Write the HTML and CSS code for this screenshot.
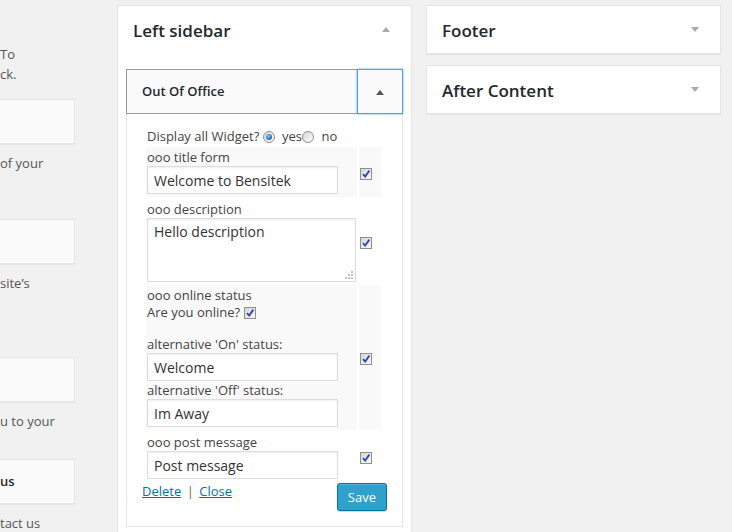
FILE: index.html
```html
<!DOCTYPE html>
<html>
<head>
<meta charset="utf-8">
<title>Widgets</title>
<link rel="stylesheet" href="styles.css">
</head>
<body>
<div class="page">
  <div class="available">
    <p class="intro">To<br>ck.</p>
    <div class="aw-box"></div>
    <p class="aw-desc d1">of your</p>
    <div class="aw-box"></div>
    <p class="aw-desc d2">site’s</p>
    <div class="aw-box"></div>
    <p class="aw-desc d3">u to your</p>
    <div class="aw-box"><span class="aw-title">us</span></div>
    <p class="aw-desc">tact us</p>
  </div>

  <div class="col col-center">
    <section class="sidebar sidebar-tall">
      <div class="sidebar-name">
        <h2>Left sidebar</h2>
        <span class="arrow up light"></span>
      </div>
      <div class="sortables">
        <div class="widget">
          <div class="widget-top">
            <h3>Out Of Office</h3>
            <span class="widget-toggle"><span class="arrow up dark"></span></span>
          </div>
          <div class="widget-inside">
            <div class="form-body">
              <div class="display-line">Display all Widget? <span class="radio checked"></span> yes<span class="radio"></span> no</div>
              <table class="ooo">
                <tr class="alt">
                  <td class="field">
                    <label>ooo title form</label>
                    <input class="text gap" type="text" value="Welcome to Bensitek">
                  </td>
                  <td class="check"><span class="cb"><svg viewBox="0 0 11 11" width="11" height="11"><path d="M2.2 5.6 L4.6 8.4 L9.2 1.8" fill="none" stroke="#3149a3" stroke-width="2"/></svg></span></td>
                </tr>
                <tr>
                  <td class="field">
                    <label>ooo description</label>
                    <span class="ta-wrap">
                      <textarea class="ta">Hello description</textarea>
                      <svg class="grip" viewBox="0 0 10 10" width="10" height="10"><g fill="#c4c4c4"><rect x="7" y="1" width="2" height="2"/><rect x="7" y="4" width="2" height="2"/><rect x="4" y="4" width="2" height="2"/><rect x="7" y="7" width="2" height="2"/><rect x="4" y="7" width="2" height="2"/><rect x="1" y="7" width="2" height="2"/></g></svg>
                    </span>
                  </td>
                  <td class="check"><span class="cb"><svg viewBox="0 0 11 11" width="11" height="11"><path d="M2.2 5.6 L4.6 8.4 L9.2 1.8" fill="none" stroke="#3149a3" stroke-width="2"/></svg></span></td>
                </tr>
                <tr class="alt">
                  <td class="field">
                    <label>ooo online status</label>
                    <div class="online-line">Are you online? <span class="cb"><svg viewBox="0 0 11 11" width="11" height="11"><path d="M2.2 5.6 L4.6 8.4 L9.2 1.8" fill="none" stroke="#3149a3" stroke-width="2"/></svg></span></div>
                    <div class="blank"></div>
                    <label>alternative 'On' status:</label>
                    <input class="text" type="text" value="Welcome">
                    <label>alternative 'Off' status:</label>
                    <input class="text gap" type="text" value="Im Away">
                  </td>
                  <td class="check"><span class="cb"><svg viewBox="0 0 11 11" width="11" height="11"><path d="M2.2 5.6 L4.6 8.4 L9.2 1.8" fill="none" stroke="#3149a3" stroke-width="2"/></svg></span></td>
                </tr>
                <tr>
                  <td class="field">
                    <label>ooo post message</label>
                    <input class="text" type="text" value="Post message">
                  </td>
                  <td class="check"><span class="cb"><svg viewBox="0 0 11 11" width="11" height="11"><path d="M2.2 5.6 L4.6 8.4 L9.2 1.8" fill="none" stroke="#3149a3" stroke-width="2"/></svg></span></td>
                </tr>
              </table>
            </div>
            <div class="actions">
              <div class="links"><a href="#">Delete</a> <span class="sep">|</span> <a href="#">Close</a></div>
              <button class="save" type="button">Save</button>
            </div>
          </div>
        </div>
      </div>
    </section>
  </div>

  <div class="col col-right">
    <section class="sidebar">
      <div class="sidebar-name">
        <h2>Footer</h2>
        <span class="arrow down light"></span>
      </div>
    </section>
    <section class="sidebar">
      <div class="sidebar-name">
        <h2>After Content</h2>
        <span class="arrow down light"></span>
      </div>
    </section>
  </div>
</div>
</body>
</html>
```
FILE: styles.css
```css
* { box-sizing: border-box; }

html, body { margin: 0; padding: 0; }

body {
  background: #f1f1f1;
  font-family: "Open Sans", "Noto Sans", sans-serif;
  font-size: 13px;
  color: #444;
}

.page {
  display: flex;
  align-items: flex-start;
  height: 532px;
  overflow: hidden;
}

/* ---------- available widgets (left, clipped) ---------- */
.available {
  width: 75px;
  flex: none;
  overflow: hidden;
  color: #555;
}

.intro {
  margin: 0;
  padding-top: 45px;
  height: 99px;
  line-height: 19.5px;
}

.aw-box {
  height: 45px;
  background: #fafafa;
  border: 1px solid #e5e5e5;
  border-left: none;
  box-shadow: 0 1px 1px rgba(0, 0, 0, 0.04);
}

.aw-title {
  display: block;
  line-height: 43px;
  font-weight: 600;
  color: #23282d;
}

.aw-desc {
  margin: 0;
  padding-top: 10px;
  line-height: 19.5px;
  white-space: nowrap;
}

.d1 { height: 75px; }
.d2 { height: 93px; }
.d3 { height: 57px; }

/* ---------- columns ---------- */
.col {
  width: 295px;
  flex: none;
  padding-top: 5px;
}

.col-center { margin-left: 42px; }
.col-right { margin-left: 14px; }

.sidebar {
  background: #fff;
  border: 1px solid #e5e5e5;
  box-shadow: 0 1px 1px rgba(0, 0, 0, 0.04);
  margin-bottom: 11px;
}

.sidebar-tall { min-height: 600px; }

.sidebar-name {
  display: flex;
  align-items: center;
  justify-content: space-between;
  height: 47px;
  padding: 0 21px 0 15px;
}

.sidebar-name h2 {
  margin: 0;
  padding: 2px 0 0;
  font-size: 17px;
  font-weight: 600;
  line-height: 23px;
  color: #23282d;
}

.arrow {
  width: 0;
  height: 0;
  border-left: 4px solid transparent;
  border-right: 4px solid transparent;
}

.arrow.up { border-bottom: 5px solid #aaa; }
.arrow.down { border-top: 5px solid #aaa; }
.arrow.light { margin-top: -1px; }
.arrow.up.dark { border-bottom-color: #555; border-left-width: 4.5px; border-right-width: 4.5px; margin-top: 1px; }

/* ---------- widget ---------- */
.sortables { padding: 16px 8px 0; }

.widget-top {
  display: flex;
  height: 45px;
  background: #fafafa;
  border: 1px solid #999;
}

.widget-top h3 {
  flex: 1;
  margin: 0;
  padding: 0 15px;
  font-size: 13px;
  font-weight: 600;
  line-height: 43px;
  color: #23282d;
}

.widget-toggle {
  width: 46px;
  margin: -1px -1px -1px 0;
  border: 1px solid #5b9dd9;
  box-shadow: 0 0 2px rgba(30, 140, 190, 0.8);
  display: flex;
  align-items: center;
  justify-content: center;
}

.widget-inside {
  background: #fff;
  border: 1px solid #e5e5e5;
  border-top: none;
  padding: 0 15px 15px;
}

.form-body { padding-top: 13px; }

.display-line {
  padding-left: 5px;
  line-height: 18px;
  height: 18px;
}

.radio {
  display: inline-block;
  width: 12px;
  height: 12px;
  border-radius: 50%;
  border: 1px solid #8e8f8f;
  background: linear-gradient(135deg, #d8d8d8, #fbfbfb);
  vertical-align: -2px;
  margin-right: 4px;
  position: relative;
}

.radio.checked::after {
  content: "";
  position: absolute;
  left: 2px;
  top: 2px;
  width: 6px;
  height: 6px;
  border-radius: 50%;
  background: radial-gradient(circle at 40% 35%, #7fd0f5, #1f64a6 70%);
}

table.ooo {
  border-spacing: 2px;
  margin-left: 2px;
  table-layout: fixed;
  width: 239px;
}

table.ooo td {
  padding: 1px;
}

td.field {
  width: 211px;
  vertical-align: top;
}

td.check {
  width: 22px;
  vertical-align: middle;
  padding-left: 3px;
}

tr.alt td { background: #f9f9f9; }

td.field label {
  display: block;
  line-height: 19px;
  height: 18px;
}

input.text {
  display: block;
  width: 191px;
  height: 28px;
  margin: 0;
  padding: 3px 6px;
  border: 1px solid #ddd;
  box-shadow: inset 0 1px 2px rgba(0, 0, 0, 0.07);
  background: #fff;
  font-family: "Open Sans", "Noto Sans", sans-serif;
  font-size: 14px;
  color: #333;
  outline: none;
}

input.text.gap { margin-bottom: 2px; }

.ta-wrap {
  display: block;
  position: relative;
  width: 209px;
  height: 64px;
}

textarea.ta {
  display: block;
  width: 209px;
  height: 64px;
  margin: 0;
  padding: 3px 6px;
  border: 1px solid #ddd;
  box-shadow: inset 0 1px 2px rgba(0, 0, 0, 0.07);
  font-family: "Open Sans", "Noto Sans", sans-serif;
  font-size: 14px;
  line-height: 19px;
  color: #333;
  resize: none;
  outline: none;
}

.grip {
  position: absolute;
  right: 2px;
  bottom: 2px;
}

.online-line {
  height: 16px;
  line-height: 17px;
}

.online-line .cb { vertical-align: -2px; }

.blank { height: 15px; }

.cb {
  display: inline-block;
  width: 12px;
  height: 12px;
  border: 1px solid #8e8f8f;
  background: linear-gradient(135deg, #d6d6d6, #f9f9f9);
  position: relative;
  vertical-align: middle;
}

.cb svg {
  position: absolute;
  left: 0;
  top: 0;
  width: 10px;
  height: 10px;
}

/* ---------- actions ---------- */
.actions {
  display: flex;
  justify-content: space-between;
  align-items: flex-start;
}

.links {
  line-height: 18px;
  color: #666;
}

.links a {
  color: #0073aa;
  text-decoration: underline;
}

.sep { margin: 0 2px; }

.save {
  margin-top: 1px;
  height: 28px;
  padding: 0 10px 1px;
  font-family: "Open Sans", "Noto Sans", sans-serif;
  font-size: 13px;
  line-height: 26px;
  color: #fff;
  background: #2ea2cc;
  border: 1px solid #0074a2;
  border-radius: 3px;
  box-shadow: inset 0 1px 0 rgba(120, 200, 230, 0.5), 0 1px 0 rgba(0, 0, 0, 0.15);
}
```
